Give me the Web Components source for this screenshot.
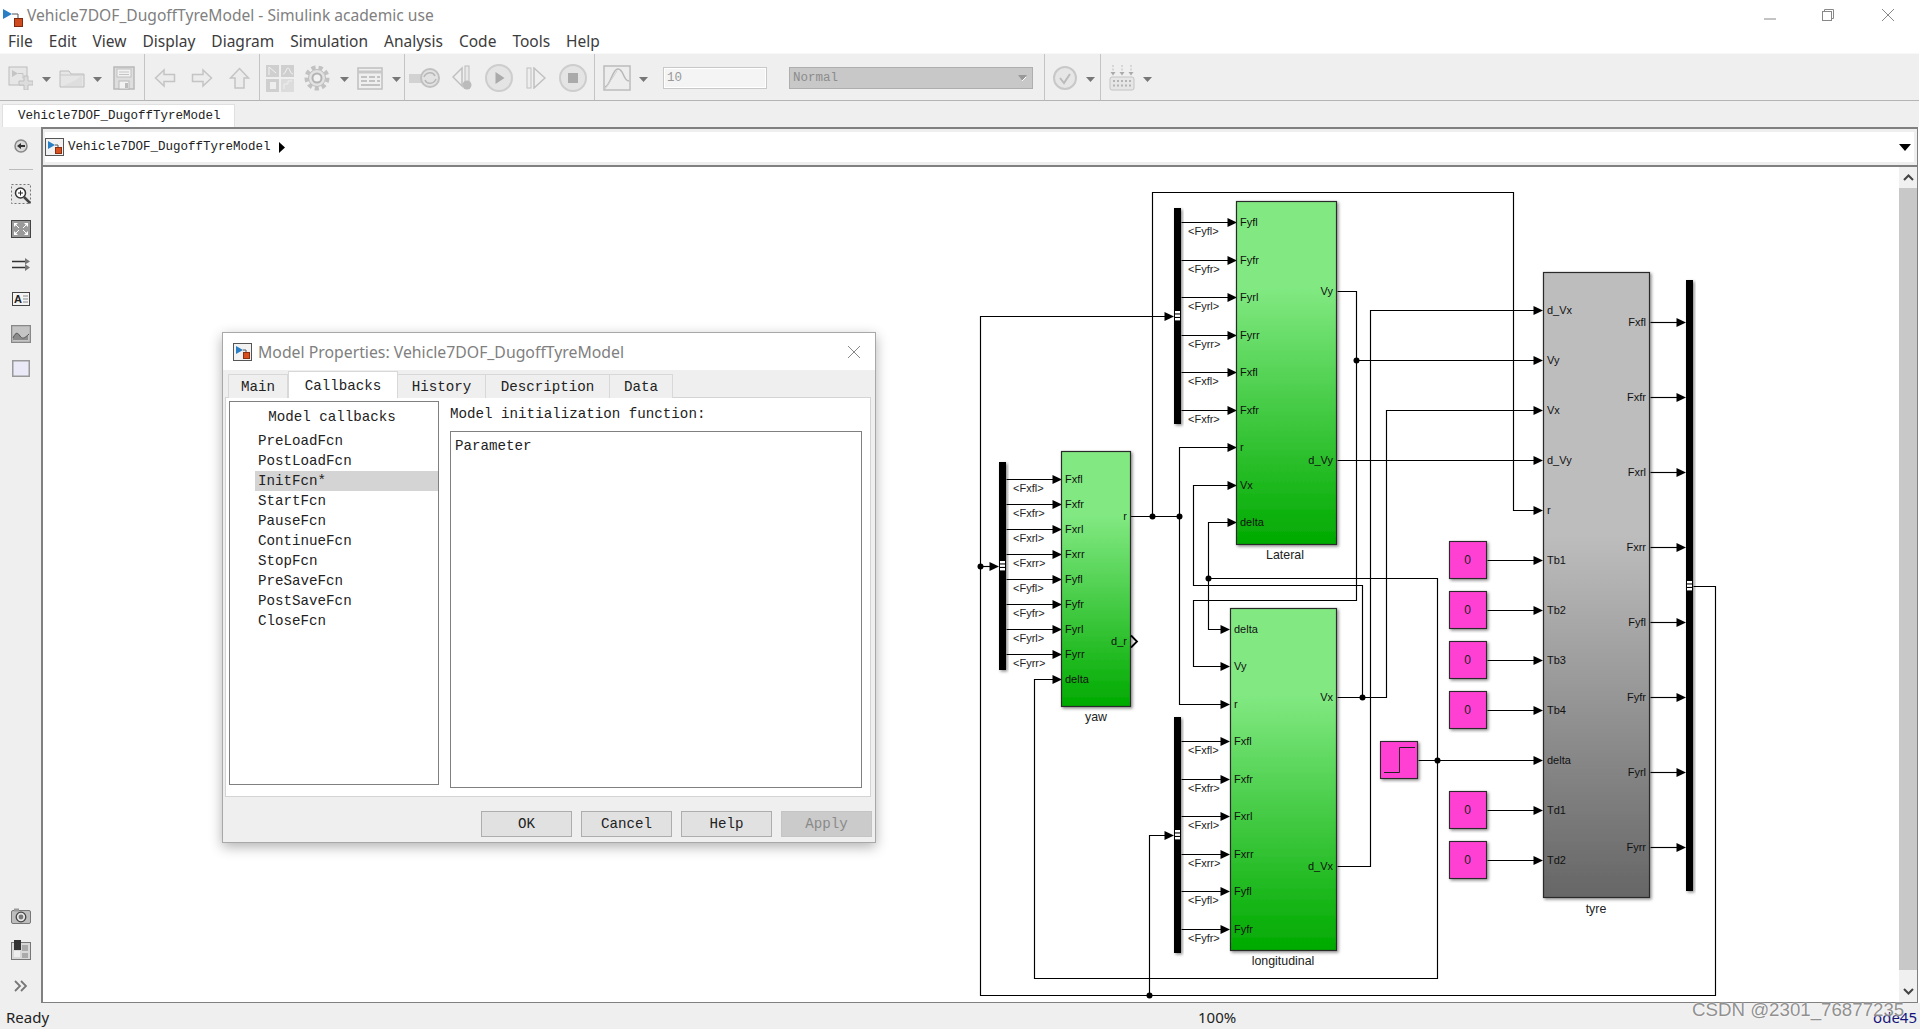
<!DOCTYPE html>
<html>
<head>
<meta charset="utf-8">
<title>Vehicle7DOF_DugoffTyreModel - Simulink academic use</title>
<style>
  html, body { margin: 0; padding: 0; background: #fff; overflow: hidden; }
</style>
</head>
<body>
<sl-app>
  <sl-titlebar text="Vehicle7DOF_DugoffTyreModel - Simulink academic use"></sl-titlebar>
  <sl-menubar></sl-menubar>
  <sl-toolbar></sl-toolbar>
  <sl-tabstrip text="Vehicle7DOF_DugoffTyreModel"></sl-tabstrip>
  <sl-workspace>
    <sl-palette slot="palette"></sl-palette>
    <sl-explorer slot="explorer" text="Vehicle7DOF_DugoffTyreModel"></sl-explorer>
    <sl-diagram slot="canvas"></sl-diagram>
    <sl-scrollbar slot="scroll"></sl-scrollbar>
  </sl-workspace>
  <sl-statusbar></sl-statusbar>
  <sl-dialog slot="overlay"></sl-dialog>
  <sl-watermark slot="overlay"></sl-watermark>
</sl-app>

<script>
const MONO = '"Liberation Mono", "DejaVu Sans Mono", monospace';
const UI = '"Noto Sans", "Open Sans", sans-serif';

// line + fill used by all the greyed out toolbar icons
const L = 'stroke="#bcbcbc" fill="#e6e6e6"';
const D = 'fill="#c4c4c4"';

const ICONS = {
  caret: [9, 5, `<path d="M0 0h9L4.5 5z" fill="#777"/>`],
  model: [20, 19, `<path d="M0 1l9 5-9 5z" fill="#2a7fc4"/><path d="M9 6h6v6" fill="none" stroke="#555"/><rect x="11.5" y="10.5" width="8" height="8" fill="#cf4a1c" stroke="#7a2a10"/>`],
  modelbox: [19, 18, `<rect x=".5" y=".5" width="18" height="17" fill="#f2f2f2" stroke="#555"/><path d="M3 3l7 4-7 4z" fill="#2a7fc4"/><path d="M10 7h3v3" fill="none" stroke="#555"/><rect x="10.5" y="9.5" width="6" height="6" fill="#d8501f" stroke="#8a3010"/>`],
  newmodel: [25, 24, `<rect x="1" y="1" width="18" height="18" ${L}/><path d="M4 4l6 3.5-6 3.5z" ${D}/><path d="M10 7.500h5v5" fill="none" stroke="#c4c4c4"/><path d="M16 10h4v5h5v4h-5v5h-4v-5h-5v-4h5z" fill="#dcdcdc" stroke="#c0c0c0"/>`],
  folder: [26, 20, `<path d="M1 3h9l2 3h13v13H1z" ${L}/><path d="M1 7h24" stroke="#c8c8c8"/><path d="M17 12l6-5v11H4z" fill="#dedede"/>`],
  save: [22, 24, `<rect x="1" y="1" width="20" height="22" fill="#dedede" stroke="#b8b8b8" stroke-width="1.500"/><rect x="4" y="3" width="14" height="8" fill="#f2f2f2" stroke="#c0c0c0"/><path d="M6 6h10M6 8.500h10" stroke="#c4c4c4"/><rect x="6" y="15" width="10" height="8" fill="#f2f2f2" stroke="#b8b8b8"/><rect x="12" y="17" width="3" height="5" fill="#bbb"/>`],
  back: [22, 20, `<path d="M1.500 10L10 2v4.500h10.500v7H10V18z" fill="#ececec" stroke="#c4c4c4" stroke-width="1.500"/>`],
  fwd: [22, 20, `<path d="M20.500 10L12 2v4.500H1.500v7H12V18z" fill="#ececec" stroke="#c4c4c4" stroke-width="1.500"/>`],
  up: [21, 22, `<path d="M10.500 1.500L19.500 11H15v10H6V11H1.500z" fill="#ececec" stroke="#c4c4c4" stroke-width="1.500"/>`],
  lib: [28, 27, `<rect x="0" y="0" width="13" height="12" fill="#cfcfcf"/><rect x="15" y="0" width="13" height="12" fill="#cfcfcf"/><rect x="0" y="14" width="13" height="13" fill="#cfcfcf"/><rect x="15" y="14" width="13" height="13" fill="#dcdcdc"/><path d="M3 10V2l7 6M17 9c3 0 3-6 5-6s2 6 5 6" fill="none" stroke="#f2f2f2"/><rect x="4" y="17" width="6" height="7" fill="#eee"/><path d="M18 24v-5h4v-3h4" fill="none" stroke="#eee"/>`],
  gear: [26, 26, `<circle cx="13" cy="13" r="10.500" fill="none" stroke="#c2c2c2" stroke-width="4" stroke-dasharray="4.200 3.050"/><circle cx="13" cy="13" r="8.500" fill="#e2e2e2" stroke="#bdbdbd"/><circle cx="13" cy="13" r="4.500" fill="#f2f2f2" stroke="#b4b4b4" stroke-width="2"/>`],
  table: [26, 23, `<rect x="1" y="1" width="24" height="21" fill="#efefef" stroke="#c0c0c0" stroke-width="1.500"/><path d="M1 5h24" stroke="#c8c8c8" stroke-width="3"/><path d="M4 10h6M12 10h6M20 10h3M4 14h6M12 14h6M20 14h3M4 18h19" stroke="#b4b4b4" stroke-width="1.500"/>`],
  record: [32, 24, `<rect x="0" y="8" width="13" height="9" fill="#d2d2d2"/><circle cx="21" cy="12" r="9" fill="#e2e2e2" stroke="#c0c0c0" stroke-width="2"/><path d="M15 11c2-5 9-6 11-1M27 13c-2 5-9 6-11 1" fill="none" stroke="#b8b8b8" stroke-width="1.500"/>`],
  stepback: [24, 26, `<path d="M10 3L1 12l9 9z" fill="#efefef" stroke="#c0c0c0" stroke-width="1.500"/><rect x="13" y="1" width="4" height="17" fill="#e8e8e8" stroke="#bcbcbc"/><circle cx="15" cy="20" r="4.500" fill="#bbb"/>`],
  play: [28, 28, `<circle cx="14" cy="14" r="13" fill="#e4e4e4" stroke="#cdcdcd" stroke-width="2"/><path d="M10.500 8l9 6-9 6z" fill="#aaa"/>`],
  stepfwd: [20, 22, `<rect x="1" y="1" width="4" height="20" fill="#eee" stroke="#c0c0c0"/><path d="M8 1l11 10L8 21z" fill="#efefef" stroke="#c0c0c0" stroke-width="1.500"/>`],
  stop: [28, 28, `<circle cx="14" cy="14" r="13" fill="#e4e4e4" stroke="#cdcdcd" stroke-width="2"/><rect x="9" y="9" width="10" height="10" fill="#aaa"/>`],
  scope: [28, 26, `<rect x="1" y="1" width="26" height="24" fill="#ededed" stroke="#bcbcbc" stroke-width="1.500"/><path d="M2 22C8 20 9 4 15 4s5 12 11 12" fill="none" stroke="#b8b8b8" stroke-width="1.500"/><path d="M2 24L14 6" stroke="#cfcfcf"/>`],
  check: [24, 24, `<circle cx="12" cy="12" r="11" fill="#e6e6e6" stroke="#c8c8c8" stroke-width="2"/><path d="M7 12l4 5 6-9" fill="none" stroke="#bbb" stroke-width="2"/>`],
  keyboard: [26, 26, `<path d="M4 0v8M13 0v8M22 0v8" stroke="#bdbdbd" stroke-dasharray="2 1.500"/><path d="M1.500 7h5L4 10.500zM10.500 7h5L13 10.500zM19.500 7h5L22 10.500z" fill="#aaa"/><rect x="1" y="12" width="24" height="13" rx="2" fill="#e6e6e6" stroke="#c4c4c4"/><path d="M4 16h18M4 20.500h18" stroke="#b4b4b4" stroke-width="2" stroke-dasharray="2 2"/>`],
  // left palette, these ones are enabled so darker
  nav: [14, 14, `<circle cx="7" cy="7" r="6" fill="#dadada" stroke="#888" stroke-width="1.500"/><path d="M3 7l4-3v2h4v2H7v2z" fill="#333"/>`],
  zoom: [20, 20, `<rect x=".5" y=".5" width="19" height="19" fill="#e8e8e8" stroke="#777" stroke-dasharray="2 2"/><circle cx="9.500" cy="9" r="5" fill="#fff" stroke="#333" stroke-width="1.500"/><path d="M7 9h5M9.500 6.500v5" stroke="#222"/><path d="M13 13l6 6" stroke="#444" stroke-width="2.500"/>`],
  fit: [20, 18, `<rect x=".5" y=".5" width="19" height="17" fill="#9a9a9a" stroke="#444"/><path d="M3 3h4L3 7zM17 3h-4l4 4zM3 15h4l-4-4zM17 15h-4l4-4z" fill="#fff"/><path d="M5 5l3 3M15 5l-3 3M5 13l3-3M15 13l-3-3" stroke="#fff"/>`],
  arrows: [18, 13, `<path d="M0 3.500h13M0 9.500h13" stroke="#333" stroke-width="1.500"/><path d="M13 0l5 3.500-5 3zM13 6l5 3.500-5 3.500z" fill="#777"/>`],
  note: [18, 14, `<rect x=".5" y=".5" width="17" height="13" fill="#f4f4f4" stroke="#444"/><text x="2" y="11" font-family="Liberation Sans" font-weight="700" font-size="11" fill="#222">A</text><path d="M11 4h5M11 7h5M11 10h5" stroke="#888"/>`],
  picture: [20, 18, `<rect x=".5" y=".5" width="19" height="17" fill="#c4c4c4" stroke="#888" stroke-width="1.500"/><path d="M2 13c3-7 5-5 7-2s4 3 8-1v5H2z" fill="#8a8a8a"/><path d="M2 13c3-7 5-5 7-2s4 3 9-2" fill="none" stroke="#555"/>`],
  rect: [18, 17, `<rect x=".75" y=".75" width="16.500" height="15.500" fill="#e9e9f8" stroke="#999" stroke-width="1.500"/>`],
  camera: [20, 16, `<rect x=".5" y="2.500" width="19" height="13" rx="1.500" fill="#bdbdbd" stroke="#777"/><rect x="3" y="0.500" width="5" height="3" fill="#999"/><circle cx="10" cy="9" r="4.800" fill="#e4e4e4" stroke="#444" stroke-width="1.300"/><circle cx="10" cy="9" r="2.400" fill="#777"/>`],
  browser: [20, 20, `<rect x=".5" y="2.500" width="19" height="17" fill="#d8d8d8" stroke="#777"/><rect x="3" y="0" width="7" height="10" fill="#333"/><rect x="3" y="11" width="6" height="6" fill="#eee"/><rect x="11" y="5" width="6" height="6" fill="#aaa"/><rect x="11" y="13" width="6" height="5" fill="#aaa"/>`],
  more: [13, 12, `<path d="M1 1l5 5-5 5M7 1l5 5-5 5" fill="none" stroke="#777" stroke-width="1.800"/>`],
  chevup: [11, 7, `<path d="M1 6l4.500-4.500L10 6" fill="none" stroke="#444" stroke-width="2"/>`],
  chevdown: [11, 7, `<path d="M1 1l4.500 4.500L10 1" fill="none" stroke="#444" stroke-width="2"/>`],
  cross: [14, 14, `<path d="M1 1l12 12M13 1L1 13" stroke="#888" stroke-width="1"/>`],
  minimize: [12, 2, `<path d="M0 1h12" stroke="#888"/>`],
  restore: [12, 12, `<rect x=".5" y="2.500" width="9" height="9" fill="#fff" stroke="#888"/><path d="M2.500 2.500v-2h9v9h-2" fill="none" stroke="#888"/>`],
  triangle: [8, 11, `<path d="M1 0l6 5.500-6 5.500z" fill="#000"/>`],
  caretblack: [12, 7, `<path d="M0 0h12L6 7z" fill="#000"/>`],
  caretlight: [9, 6, `<path d="M0 0h9L4.500 6z" fill="#999"/><path d="M4 6l4-4" stroke="#fff"/>`],
};

class SlIcon extends HTMLElement {
  connectedCallback() {
    const [w, h, body] = ICONS[this.getAttribute('name')];
    if (!this.shadowRoot) this.attachShadow({ mode: 'open' });
    this.shadowRoot.innerHTML = `
      <style>:host { display: block; flex: none; width: ${w}px; height: ${h}px; line-height: 0; }</style>
      <svg width="${w}" height="${h}" viewBox="0 0 ${w} ${h}">${body}</svg>`;
  }
}
customElements.define('sl-icon', SlIcon);

class SlApp extends HTMLElement {
  constructor() {
    super();
    this.attachShadow({ mode: 'open' }).innerHTML = `
      <style>
        :host { display: flex; flex-direction: column; width: 1920px; height: 1029px; position: relative; background: #fff; font-family: ${UI}; overflow: hidden; }
      </style>
      <slot></slot>
      <slot name="overlay"></slot>`;
  }
}
customElements.define('sl-app', SlApp);

class SlTitlebar extends HTMLElement {
  connectedCallback() {
    this.attachShadow({ mode: 'open' }).innerHTML = `
      <style>
        :host { display: flex; align-items: center; height: 30px; background: #fff; color: #808080; font-size: 15.600px; flex: none; }
        .ico { margin: 4px 4px 0 3px; }
        .grow { flex: 1; }
      </style>
      <sl-icon class="ico" name="model"></sl-icon>
      <span>${this.getAttribute('text')}</span>
      <span class="grow"></span>
      <sl-icon name="minimize" style="margin-right:46px"></sl-icon>
      <sl-icon name="restore" style="margin-right:47px"></sl-icon>
      <sl-icon name="cross" style="margin-right:25px"></sl-icon>`;
  }
}
customElements.define('sl-titlebar', SlTitlebar);

class SlMenubar extends HTMLElement {
  connectedCallback() {
    const items = ['File', 'Edit', 'View', 'Display', 'Diagram', 'Simulation', 'Analysis', 'Code', 'Tools', 'Help'];
    this.attachShadow({ mode: 'open' }).innerHTML = `
      <style>
        :host { display: flex; align-items: center; height: 21px; padding-bottom: 2px; flex: none; background: #fff; color: #3c3c3c; font-size: 15.500px; }
        span { padding: 0 8px; }
      </style>
      ${items.map(m => `<span>${m}</span>`).join('')}`;
  }
}
customElements.define('sl-menubar', SlMenubar);

class SlToolbar extends HTMLElement {
  connectedCallback() {
    // [icon, margin-left]
    const group = (width, list) => `<div class="group" style="width:${width}px">${list.map(([n, m]) =>
      `<sl-icon name="${n}" style="margin-left:${m}px"></sl-icon>`).join('')}</div>`;
    this.attachShadow({ mode: 'open' }).innerHTML = `
      <style>
        :host { display: flex; height: 46px; margin-right: 1px; flex: none; background: #efefef; border-top: 1px solid #f8f8f8; border-bottom: 1px solid #b4b4b4; box-sizing: content-box; }
        .group { display: flex; align-items: center; flex: none; box-sizing: border-box; padding-top: 2px; border-right: 1px solid #c4c4c4; }
        .group.last { border: 0; flex: 1; }
        .input { width: 104px; height: 22px; box-sizing: border-box; margin-left: 15px; background: #f4f4f4; border: 1px solid #c8c8c8; outline: 1px solid #fff; outline-offset: -2px; font: 12.500px ${MONO}; color: #999; line-height: 20px; padding-left: 3px; }
        .select { display: flex; align-items: center; justify-content: space-between; width: 244px; height: 22px; box-sizing: border-box; margin-left: 22px; background: #c8c8c8; border: 1px solid #aeaeae; font: 12.500px ${MONO}; color: #8c8c8c; padding: 0 5px 0 3px; }
      </style>
      ${group(145, [['newmodel', 8], ['caret', 9], ['folder', 8], ['caret', 8], ['save', 11]])}
      ${group(115, [['back', 9], ['fwd', 15], ['up', 16]])}
      ${group(145, [['lib', 6], ['gear', 10], ['caret', 10], ['table', 8], ['caret', 9]])}
      ${group(190, [['record', 4], ['stepback', 11], ['play', 9], ['stepfwd', 13], ['stop', 13]])}
      <div class="group" style="width:450px;padding-left:8px">
        <sl-icon name="scope"></sl-icon><sl-icon name="caret" style="margin-left:8px"></sl-icon>
        <div class="input">10</div>
        <div class="select"><span>Normal</span><sl-icon name="caretlight"></sl-icon></div>
      </div>
      ${group(56, [['check', 8], ['caret', 9]])}
      <div class="group last"><sl-icon name="keyboard" style="margin-left:8px"></sl-icon><sl-icon name="caret" style="margin-left:8px"></sl-icon></div>`;
  }
}
customElements.define('sl-toolbar', SlToolbar);

class SlTabstrip extends HTMLElement {
  connectedCallback() {
    this.attachShadow({ mode: 'open' }).innerHTML = `
      <style>
        :host { display: flex; align-items: flex-end; height: 26px; margin-right: 1px; flex: none; background: #efefef; padding-left: 2px; box-sizing: border-box; }
        .tab { width: 233px; height: 23px; box-sizing: border-box; background: #fff; border: 1px solid #e0e0e0; border-bottom: 0; font: 12.500px/23px ${MONO}; color: #222; padding-left: 15px; }
      </style>
      <div class="tab">${this.getAttribute('text')}</div>`;
  }
}
customElements.define('sl-tabstrip', SlTabstrip);

class SlWorkspace extends HTMLElement {
  constructor() {
    super();
    this.attachShadow({ mode: 'open' }).innerHTML = `
      <style>
        :host { display: grid; grid-template-columns: 41px 1858px 19px; grid-template-rows: 40px 836px; height: 876px; margin-right: 2px; flex: none; background: #efefef; }
        slot { display: block; min-width: 0; }
        .palette { grid-row: 1 / 3; }
        .explorer { grid-column: 2 / 4; }
        .scroll { border-right: 1px solid #808080; border-bottom: 1px solid #808080; }
      </style>
      <slot class="palette" name="palette"></slot>
      <slot class="explorer" name="explorer"></slot>
      <slot class="canvas" name="canvas"></slot>
      <div class="scroll"><slot name="scroll"></slot></div>`;
  }
}
customElements.define('sl-workspace', SlWorkspace);

class SlPalette extends HTMLElement {
  connectedCallback() {
    this.attachShadow({ mode: 'open' }).innerHTML = `
      <style>
        :host { display: flex; flex-direction: column; align-items: center; height: 876px; box-sizing: border-box; padding-top: 12px; background: #efefef; }
        hr { width: 24px; margin: 16px 0 14px; border: 0; border-top: 1px solid #bbb; }
        .grow { flex: 1; }
      </style>
      <sl-icon name="nav"></sl-icon>
      <hr>
      <sl-icon name="zoom"></sl-icon>
      <sl-icon name="fit" style="margin-top:16px"></sl-icon>
      <sl-icon name="arrows" style="margin-top:20px"></sl-icon>
      <sl-icon name="note" style="margin-top:21px"></sl-icon>
      <sl-icon name="picture" style="margin-top:19px"></sl-icon>
      <sl-icon name="rect" style="margin-top:17px"></sl-icon>
      <span class="grow"></span>
      <sl-icon name="camera"></sl-icon>
      <sl-icon name="browser" style="margin-top:16px"></sl-icon>
      <sl-icon name="more" style="margin:20px 0 11px"></sl-icon>`;
  }
}
customElements.define('sl-palette', SlPalette);

class SlExplorer extends HTMLElement {
  connectedCallback() {
    this.attachShadow({ mode: 'open' }).innerHTML = `
      <style>
        :host { display: block; height: 40px; box-sizing: border-box; border: solid #808080; border-width: 2px 1px 2px 2px; padding: 3px 3px 3px 2px; background: #efefef; }
        .bar { display: flex; align-items: center; height: 30px; background: #fff; font: 12.500px ${MONO}; color: #222; }
        .path { margin: 0 0 0 4px; }
        .grow { flex: 1; }
      </style>
      <div class="bar">
        <sl-icon name="modelbox"></sl-icon>
        <span class="path">${this.getAttribute('text')}</span>
        <sl-icon name="triangle" style="margin-left:7px"></sl-icon>
        <span class="grow"></span>
        <sl-icon name="caretblack" style="margin-right:3px"></sl-icon>
      </div>`;
  }
}
customElements.define('sl-explorer', SlExplorer);

class SlScrollbar extends HTMLElement {
  connectedCallback() {
    this.attachShadow({ mode: 'open' }).innerHTML = `
      <style>
        :host { display: flex; flex-direction: column; height: 835px; background: #c8c8c8; }
        .btn { display: flex; align-items: center; justify-content: center; background: #f0f0f0; }
        .grow { flex: 1; }
      </style>
      <div class="btn" style="height:21px"><sl-icon name="chevup"></sl-icon></div>
      <div class="grow"></div>
      <div class="btn" style="height:32px;padding-top:10px;box-sizing:border-box"><sl-icon name="chevdown"></sl-icon></div>`;
  }
}
customElements.define('sl-scrollbar', SlScrollbar);

class SlDiagram extends HTMLElement {
  connectedCallback() {
    const s = v => Math.floor(v) + .5;
    let out = '';
    let top = '';

    const arrow = (x, y) => `<path d="M${x} ${s(y)}l-9.500-4.500v9z" fill="#000"/>`;
    const wire = (pts, head = true) => {
      const last = pts[pts.length - 1];
      const d = pts.map(([x, y], i) => {
        const px = (i === pts.length - 1 && head) ? x - 8 : s(x);
        return `${i ? 'L' : 'M'}${px} ${s(y)}`;
      }).join('');
      return `<path d="${d}" fill="none" stroke="#000" stroke-width="1.150"/>${head ? arrow(last[0], last[1]) : ''}`;
    };
    const dot = (x, y) => `<circle cx="${s(x)}" cy="${s(y)}" r="3" fill="#000"/>`;
    const label = (x, y, text, anchor = 'start', size = 11, fill = '#111') =>
      `<text x="${x}" y="${y}" font-size="${size}" text-anchor="${anchor}" fill="${fill}">${text}</text>`;

    const block = (x, y, w, h, grad, inputs, outputs, caption, capX, capY) => {
      let g = `<rect x="${s(x)}" y="${s(y)}" width="${w}" height="${h}" fill="url(#${grad})" stroke="#2b2b2b" stroke-width="1.200" filter="url(#drop)"/>`;
      inputs.forEach(([t, py]) => { g += label(x + 4, py + 4, t); });
      outputs.forEach(([t, py]) => { g += label(x + w - 3, py + 4, t, 'end'); });
      g += label(capX, capY + 4, caption, 'middle', 12.400, '#222');
      return g;
    };

    const bus = (x, y, h, hy, labels, target) => {
      let g = `<rect x="${x}" y="${y}" width="7" height="${h}" fill="#000" filter="url(#drop)"/>`;
      [0, 3.500, 7].forEach(d => { g += `<rect x="${x + 1}" y="${hy - 5 + d}" width="5" height="2.400" fill="#fff"/>`; });
      labels.forEach(([t, ly]) => {
        g += wire([[x + 7, ly], [target, ly]]);
        g += label(x + 14, ly + 13, '&lt;' + t + '&gt;', 'start', 11, '#222');
      });
      return g;
    };

    const constant = y => `<rect x="1449.500" y="${s(y - 19)}" width="37" height="37" fill="#ff40d2" stroke="#2b2b2b" stroke-width="1.100" filter="url(#drop)"/>` +
      label(1467.700, y + 4, '0', 'middle', 12, '#222') + wire([[1487, y], [1543, y]]);

    // wires first, blocks go on top
    out += wire([[1130, 517], [1180, 517]], false);
    out += wire([[1152, 517], [1152, 193], [1513, 193], [1513, 511], [1543, 511]]);
    out += wire([[1179, 517], [1179, 448], [1237, 448]]);
    out += wire([[1179, 517], [1179, 705], [1230, 705]]);
    out += wire([[1337, 292], [1356, 292], [1356, 601], [1193, 601], [1193, 667], [1230, 667]]);
    out += wire([[1356, 361], [1543, 361]]);
    out += wire([[1337, 461], [1543, 461]]);
    out += wire([[1337, 867], [1370, 867], [1370, 311], [1543, 311]]);
    out += wire([[1337, 698], [1386, 698], [1386, 411], [1543, 411]]);
    out += wire([[1362, 698], [1362, 586], [1193, 586], [1193, 486], [1237, 486]]);
    out += wire([[1418, 761], [1543, 761]]);
    out += wire([[1437, 761], [1437, 579], [1208, 579], [1208, 523], [1237, 523]]);
    out += wire([[1208, 579], [1208, 630], [1230, 630]]);
    out += wire([[1437, 761], [1437, 979], [1034, 979], [1034, 680], [1062, 680]]);
    out += wire([[1693, 587], [1715, 587], [1715, 996], [980, 996], [980, 317], [1174, 317]]);
    out += wire([[980, 567], [999, 567]]);
    out += wire([[1149, 996], [1149, 836], [1174, 836]]);

    [[1152, 517], [1179, 517], [1356, 361], [1362, 698], [1437, 761], [1208, 579], [980, 567], [1149, 996]]
      .forEach(([x, y]) => { top += dot(x, y); });

    // yaw
    const yawIn = [['Fxfl', 480], ['Fxfr', 505], ['Fxrl', 530], ['Fxrr', 555], ['Fyfl', 580], ['Fyfr', 605], ['Fyrl', 630], ['Fyrr', 655], ['delta', 680]];
    top += bus(999, 463, 208, 567, yawIn.slice(0, 8), 1062);
    top += block(1061, 452, 69, 255, 'green', yawIn, [['r', 517], ['d_r', 642]], 'yaw', 1096, 718);
    top += `<path d="M1131 636.500l6 6-6 6" fill="none" stroke="#000" stroke-width="1.800"/>`;

    // lateral
    const latIn = [['Fyfl', 223], ['Fyfr', 261], ['Fyrl', 298], ['Fyrr', 336], ['Fxfl', 373], ['Fxfr', 411]];
    top += bus(1174, 209, 216, 317, latIn, 1237);
    top += block(1236, 202, 100, 343, 'green', latIn.concat([['r', 448], ['Vx', 486], ['delta', 523]]), [['Vy', 292], ['d_Vy', 461]], 'Lateral', 1285, 556);

    // longitudinal
    const lonIn = [['Fxfl', 742], ['Fxfr', 780], ['Fxrl', 817], ['Fxrr', 855], ['Fyfl', 892], ['Fyfr', 930]];
    top += bus(1174, 718, 236, 836, lonIn, 1230);
    top += block(1230, 609, 106, 342, 'green', [['delta', 630], ['Vy', 667], ['r', 705]].concat(lonIn), [['Vx', 698], ['d_Vx', 867]], 'longitudinal', 1283, 962);

    // tyre
    const tyreIn = [['d_Vx', 311], ['Vy', 361], ['Vx', 411], ['d_Vy', 461], ['r', 511], ['Tb1', 561], ['Tb2', 611], ['Tb3', 661], ['Tb4', 711], ['delta', 761], ['Td1', 811], ['Td2', 861]];
    const tyreOut = [['Fxfl', 323], ['Fxfr', 398], ['Fxrl', 473], ['Fxrr', 548], ['Fyfl', 623], ['Fyfr', 698], ['Fyrl', 773], ['Fyrr', 848]];
    top += block(1543, 273, 106, 625, 'grey', tyreIn, tyreOut, 'tyre', 1596, 910);
    tyreOut.forEach(([, y]) => { top += wire([[1650, y], [1686, y]]); });
    top += `<rect x="1686" y="281" width="7" height="611" fill="#000" filter="url(#drop)"/>`;
    [0, 3.500, 7].forEach(d => { top += `<rect x="1687" y="${582 + d}" width="5" height="2.400" fill="#fff"/>`; });

    // constants and the step
    [561, 611, 661, 711, 811, 861].forEach(y => { top += constant(y); });
    top += `<rect x="1380.500" y="742.500" width="37" height="37" fill="#ff40d2" stroke="#2b2b2b" stroke-width="1.100" filter="url(#drop)"/>`;
    top += `<path d="M1384 773.500h15.500v-25H1415" fill="none" stroke="#222"/>`;

    this.attachShadow({ mode: 'open' }).innerHTML = `
      <style>
        :host { display: block; height: 836px; box-sizing: border-box; border-left: 2px solid #808080; border-bottom: 1px solid #808080; background: #fff; overflow: hidden; }
        svg { display: block; font-family: "Liberation Sans", Arial, sans-serif; }
      </style>
      <svg width="1856" height="835" viewBox="43 168 1856 835">
        <defs>
          <linearGradient id="green" x1="0" y1="0" x2="0" y2="1">
            <stop offset="0" stop-color="#82e982"/><stop offset=".25" stop-color="#82e982"/><stop offset="1" stop-color="#00aa00"/>
          </linearGradient>
          <linearGradient id="grey" x1="0" y1="0" x2="0" y2="1">
            <stop offset="0" stop-color="#bdbdbd"/><stop offset=".42" stop-color="#bdbdbd"/><stop offset="1" stop-color="#666"/>
          </linearGradient>
          <filter id="drop" x="-20%" y="-5%" width="150%" height="115%">
            <feDropShadow dx="1.500" dy="1.500" stdDeviation="1.500" flood-color="#000" flood-opacity=".45"/>
          </filter>
        </defs>
        ${out}${top}
      </svg>`;
  }
}
customElements.define('sl-diagram', SlDiagram);

class SlStatusbar extends HTMLElement {
  connectedCallback() {
    this.attachShadow({ mode: 'open' }).innerHTML = `
      <style>
        :host { display: flex; align-items: center; height: 25px; padding: 1px 0 0 6px; flex: none; background: #efefef; font-size: 15px; color: #222; }
        .ready { width: 1192px; }
        .ode { margin-left: auto; margin-right: 3px; color: #14147a; }
      </style>
      <span class="ready">Ready</span><span>100%</span><span class="ode">ode45</span>`;
  }
}
customElements.define('sl-statusbar', SlStatusbar);

class SlDialog extends HTMLElement {
  connectedCallback() {
    const tabs = [['Main', 60], ['Callbacks', 110, true], ['History', 88], ['Description', 124], ['Data', 63]];
    const items = ['PreLoadFcn', 'PostLoadFcn', 'InitFcn*', 'StartFcn', 'PauseFcn', 'ContinueFcn', 'StopFcn', 'PreSaveFcn', 'PostSaveFcn', 'CloseFcn'];
    this.attachShadow({ mode: 'open' }).innerHTML = `
      <style>
        :host { position: absolute; left: 222px; top: 332px; width: 654px; height: 511px; box-sizing: border-box; display: flex; flex-direction: column; background: #efefef; border: 1px solid #a8a8a8; box-shadow: 0 4px 12px rgba(0,0,0,.3); font: 14.200px ${MONO}; color: #222; }
        .head { display: flex; align-items: center; height: 37px; flex: none; background: #fff; padding: 0 14px 0 10px; font: 15.800px ${UI}; color: #808080; }
        .head span { margin-left: 6px; flex: 1; }
        .tabs { display: flex; align-items: flex-end; height: 28px; flex: none; padding-left: 5px; margin-bottom: -1px; position: relative; }
        .tab { box-sizing: border-box; height: 24px; line-height: 25px; text-align: center; background: #efefef; border: 1px solid #d8d8d8; border-bottom: 0; border-left-width: 0; }
        .tab:first-child { border-left-width: 1px; }
        .tab.on { height: 27px; line-height: 29px; background: #fff; border: 1px solid #d8d8d8; border-bottom: 0; }
        .panel { display: flex; gap: 11px; height: 400px; flex: none; box-sizing: border-box; margin: 0 4px 0 2px; padding: 3px 8px 0 3px; background: #fff; border: 1px solid #d4d4d4; }
        .list { width: 210px; height: 384px; box-sizing: border-box; flex: none; border: 1px solid #808080; }
        .list h4 { margin: 0 0 -1px; height: 30px; font: inherit; line-height: 30px; text-align: center; padding-right: 4px; }
        .item { height: 20px; line-height: 20px; margin-left: 25px; padding-left: 3px; }
        .item.on { background: #d4d4d4; }
        .right { flex: 1; display: flex; flex-direction: column; }
        .cap { height: 30px; line-height: 26px; }
        .text { height: 357px; box-sizing: border-box; border: 1px solid #808080; padding: 5px 4px; line-height: 18px; }
        .foot { flex: 1; display: flex; justify-content: flex-end; gap: 9px; padding: 14px 3px 0 0; }
        .btn { width: 91px; height: 26px; box-sizing: border-box; background: #e1e1e1; border: 1px solid #adadad; text-align: center; line-height: 25px; }
        .btn.off { background: #cbcbcb; border-color: #c4c4c4; color: #8a8a8a; }
      </style>
      <div class="head"><sl-icon name="modelbox"></sl-icon><span>Model Properties: Vehicle7DOF_DugoffTyreModel</span><sl-icon name="cross"></sl-icon></div>
      <div class="tabs">${tabs.map(([t, w, on]) => `<div class="tab${on ? ' on' : ''}" style="width:${w}px">${t}</div>`).join('')}</div>
      <div class="panel">
        <div class="list"><h4>Model callbacks</h4>
          ${items.map(t => `<div class="item${t === 'InitFcn*' ? ' on' : ''}">${t}</div>`).join('')}
        </div>
        <div class="right">
          <div class="cap">Model initialization function:</div>
          <div class="text">Parameter</div>
        </div>
      </div>
      <div class="foot">
        <div class="btn">OK</div><div class="btn">Cancel</div><div class="btn">Help</div><div class="btn off">Apply</div>
      </div>`;
  }
}
customElements.define('sl-dialog', SlDialog);

class SlWatermark extends HTMLElement {
  connectedCallback() {
    this.attachShadow({ mode: 'open' }).innerHTML = `
      <style>
        :host { position: absolute; left: 1692px; top: 999px; font: 18.700px/22px "Liberation Sans", Arial, sans-serif; color: rgba(125,125,125,.85); text-shadow: 0 0 2px #fff; white-space: nowrap; }
      </style>
      CSDN @2301_76877235`;
  }
}
customElements.define('sl-watermark', SlWatermark);
</script>
</body>
</html>
